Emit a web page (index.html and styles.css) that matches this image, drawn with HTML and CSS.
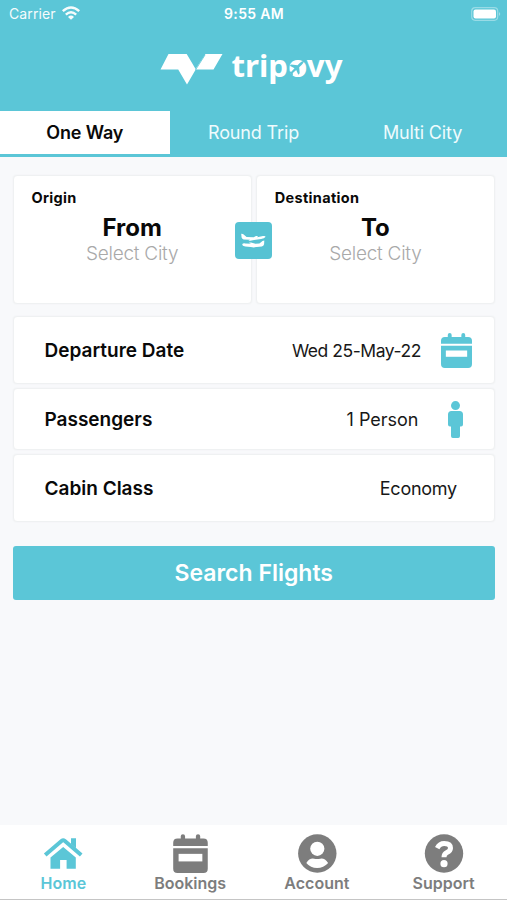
FILE: index.html
```html
<!DOCTYPE html>
<html lang="en">
<head>
<meta charset="utf-8">
<title>Tripovy</title>
<link rel="stylesheet" href="styles.css">
</head>
<body>
<div class="app">
  <header class="header">
    <div class="status">
      <div class="carrier"><span>Carrier</span>
        <svg width="18" height="14" viewBox="0 0 18 14" fill="none" stroke="#fff" stroke-width="2.4"><path d="M.8 5.1Q9-2.3 17.2 5.1M3.8 8.6Q9 4 14.2 8.6" fill="none"/><path d="M6 10.9Q9 8.3 12 10.9L9 13.8Z" stroke="none"/></svg>
      </div>
      <span class="time">9:55 AM</span>
      <svg class="battery" width="31" height="14" viewBox="0 0 31 14"><rect x=".7" y=".7" width="26" height="12.6" rx="3.5" fill="none" stroke="#fff" stroke-opacity=".38" stroke-width="1.2"/><rect x="2.5" y="2.5" width="22.5" height="9" rx="2" fill="#fff"/><path d="M28.2 5q2 2 0 4z" fill="#fff" fill-opacity=".5"/></svg>
    </div>
    <svg class="logo" width="190" height="42" viewBox="0 0 190 42">
      <path d="M8.5 6h18.2l8.9 15L45.5 6h17l-9 15.5H35.7L27 36.5 18.2 21.5H.5z" fill="#fff"/>
      <path d="M35.5 22 45 7" stroke="#5bc6d7" stroke-width=".8"/>
      <circle cx="137.9" cy="20" r="7" fill="#fff"/>
      <text class="wordmark" x="71.5" y="28.5" textLength="111" lengthAdjust="spacingAndGlyphs">tripovy</text>
      <path d="M144.2 12.8q-2.6.2-4.4 2.3l-2.3 2.1-6.2-.8-1.5 1.4 4.7 2.4-3.2 3.5-2.3-.2-1.2 1.2 3 .8.9 2.8 1.2-1.2-.1-2.1 3.4-3 2.1 4.8 1.4-1.5-.5-6 2.4-2.4q2-1.7 2.6-4.1z" fill="#5bc6d7"/>
    </svg>
    <nav class="tabs"><a class="tab selected">One Way</a><a class="tab">Round Trip</a><a class="tab">Multi City</a></nav>
  </header>
  <main class="main">
    <section class="places">
      <div class="card place"><div class="label">Origin</div><div class="name">From</div><div class="hint">Select City</div></div>
      <div class="card place"><div class="label">Destination</div><div class="name">To</div><div class="hint">Select City</div></div>
      <button class="swap" aria-label="Swap">
        <svg width="37" height="37" viewBox="0 0 37 37"><path d="M6.2 11.7 8 11.9l3.6 3.2 7.1.2 2.2-1.2h2l-.7 1.1 5.8-1.2q2.8-.4 2.4 1-1 1.4-4.3 2l-7 1-3.8.8-2-.1 1.7-.9-6.4-.2q-1.5-.4-2-2z"/><path d="m29.3 18.6-.2 3.6q-.5 2-2.3 2.4l-5 .3-3 .5-3-.3-5.6-.6q-3-.4-3-2 .4-1.4 3-1.1l6 .4-2.6-1.1 2.4-.1 4.5 1.2 3.9-.2 3.1-2.6z"/></svg>
      </button>
    </section>
    <section class="rows">
      <div class="card row date"><span class="title">Departure Date</span><span class="value">Wed 25-May-22</span>
        <svg class="calendar" viewBox="0 0 32 36"><path d="M7 4V2q0-2 2-2t2 2v2h10V2q0-2 2-2t2 2v2h3q4 0 4 4v3H0V8q0-4 4-4zM0 13h32v19q0 4-4 4H4q-4 0-4-4z"/><path d="M5 18h22v6.5H5z" fill="#fff"/></svg>
      </div>
      <div class="card row people"><span class="title">Passengers</span><span class="value">1 Person</span>
        <svg class="person" width="15" height="37" viewBox="0 0 15 37"><circle cx="7.5" cy="4.6" r="4.5"/><path d="M3.5 10h8q3.5 0 3.5 3.5v10q0 2-2 2h-1V35q0 2-1.8 2H4.8Q3 37 3 35v-9.5H2q-2 0-2-2v-10Q0 10 3.5 10z"/></svg>
      </div>
      <div class="card row cabin"><span class="title">Cabin Class</span><span class="value">Economy</span></div>
    </section>
    <button class="search"><span>Search Flights</span></button>
  </main>
  <footer class="bottom">
    <a class="item active"><svg width="40" height="40" viewBox="0 0 40 40"><path d="M7.5 22.5 20.2 12l12.6 10.5v11.3h-9.2v-8.8h-6.5v8.8H7.5z"/><path d="M28 3.2h5v10l-5-4.2z"/><path d="M2.2 20 18.8 5.8q1.4-1.1 2.8 0L38.2 20" fill="none" stroke="currentColor" stroke-width="4"/></svg><span>Home</span></a>
    <a class="item"><svg width="40" height="40" viewBox="0 0 40 40"><g transform="translate(3.2 -.8) scale(1.08)"><path d="M7 4V2q0-2 2-2t2 2v2h10V2q0-2 2-2t2 2v2h3q4 0 4 4v3H0V8q0-4 4-4zM0 13h32v19q0 4-4 4H4q-4 0-4-4z"/><path d="M5 18.2h22v7H5z" fill="#fff"/></g></svg><span>Bookings</span></a>
    <a class="item"><svg width="40" height="40" viewBox="0 0 40 40"><circle cx="20.3" cy="18.5" r="19.2"/><g fill="#fff"><circle cx="20.3" cy="13.8" r="7.1"/><path d="M9.3 28q3.3-5.2 7.8-4.3 3.1.8 6.2 0 4.3-.9 7.8 4.3-4.5 5-11 5T9.3 28z"/></g></svg><span>Account</span></a>
    <a class="item"><svg width="40" height="40" viewBox="0 0 40 40"><circle cx="20" cy="18.5" r="19.2"/><path d="M13.2 13.1q2.5-4.6 7-4.6 6.3 0 6.3 4.6 0 2.8-3.6 4.5-2.9 1.4-2.9 4.6" fill="none" stroke="#fff" stroke-width="5"/><circle cx="20" cy="28.7" r="3.6" fill="#fff"/></svg><span>Support</span></a>
  </footer>
</div>
</body>
</html>
```
FILE: styles.css
```css
* { box-sizing: border-box; }
body { margin: 0; font-family: Inter, "Liberation Sans", sans-serif; color: #090909; background: #f8f9fb; }
button { border: 0; padding: 0; font: inherit; }
svg { display: block; fill: currentColor; flex: none; overflow: visible; }
.app { width: 507px; height: 900px; display: flex; flex-direction: column; overflow: hidden; }
.header { height: 157px; background: #5bc6d7; color: #fff; display: flex; flex-direction: column; align-items: center; flex: none; }
.status { width: 100%; height: 28px; padding: 0 8px 0 9px; display: grid; grid-template-columns: 1fr auto 1fr; align-items: center; font-size: 14px; line-height: 28px; }
.carrier { display: flex; align-items: center; gap: 6px; letter-spacing: .1px; opacity: .95; }
.carrier svg { margin-top: -2px; }
.time { font-weight: 600; font-size: 14px; letter-spacing: .3px; }
.battery { justify-self: end; margin-top: -1px; margin-right: -3px; }
.logo { margin-top: 20px; margin-bottom: 21px; margin-left: 3px; }
.wordmark { font: 700 31px "Noto Sans", sans-serif; fill: #fff; }
.tabs { display: grid; grid-template-columns: 1fr 1fr 1fr; width: 100%; height: 42.5px; }
.tab { text-align: center; line-height: 43px; font-size: 18px; letter-spacing: -.15px; color: #effbfd; }
.selected { background: #fff; color: #090909; font-weight: 600; margin-right: -.6px; }
.main { flex: 1; padding: 18px 12px 0 12.5px; }
.card { background: #fff; border: 1px solid #eff1f2; border-radius: 4px; box-shadow: 0 0 2px #eef0f1; }
.places { position: relative; display: grid; grid-template-columns: 1fr 1fr; gap: 4px; height: 129px; }
.place { text-align: center; padding-top: 11px; }
.label { text-align: left; padding-left: 18px; font-size: 14.5px; letter-spacing: .32px; font-weight: 700; line-height: 22px; }
.name { font-size: 24px; font-weight: 700; line-height: 30px; margin-top: 4px; }
.hint { color: #a9a9a9; font-size: 19px; font-weight: 300; line-height: 22px; letter-spacing: -.25px; }
.swap { position: absolute; left: 222.5px; top: 46.5px; width: 37px; height: 37px; border-radius: 4px; color: #fff; background: #56c2d3; }
.rows { display: flex; flex-direction: column; gap: 4px; margin-top: 12px; }
.row { display: flex; align-items: center; padding-left: 31px; padding-right: 22px; }
.date { height: 68px; }
.people { height: 62px; }
.cabin { height: 68px; padding-right: 37px; }
.row svg { color: #5bc6d7; }
.title { font-size: 19px; font-weight: 600; flex: 1; }
.value { font-size: 18px; color: #181818; }
.date .value { font-size: 17.5px; letter-spacing: -.45px; }
.cabin .value { letter-spacing: -.25px; }
.calendar { width: 31px; height: 35px; margin-left: 20px; }
.person { margin-left: 29px; margin-right: 9.5px; }
.search { display: block; width: 100%; height: 54px; margin-top: 24px; border-radius: 3px; color: #fff; background: #5bc6d7; font-size: 23px; font-weight: 600; line-height: 54px; }
.bottom { height: 75px; flex: none; background: #fff; display: grid; grid-template-columns: repeat(4, 1fr); padding-top: 10px; border-bottom: 1.5px solid #c5c5c5; }
.item { color: #7d7d7d; text-align: center; font-size: 16px; font-weight: 600; line-height: 17px; }
.item svg { margin: 0 auto; }
.active { color: #5bc6d7; }
```
